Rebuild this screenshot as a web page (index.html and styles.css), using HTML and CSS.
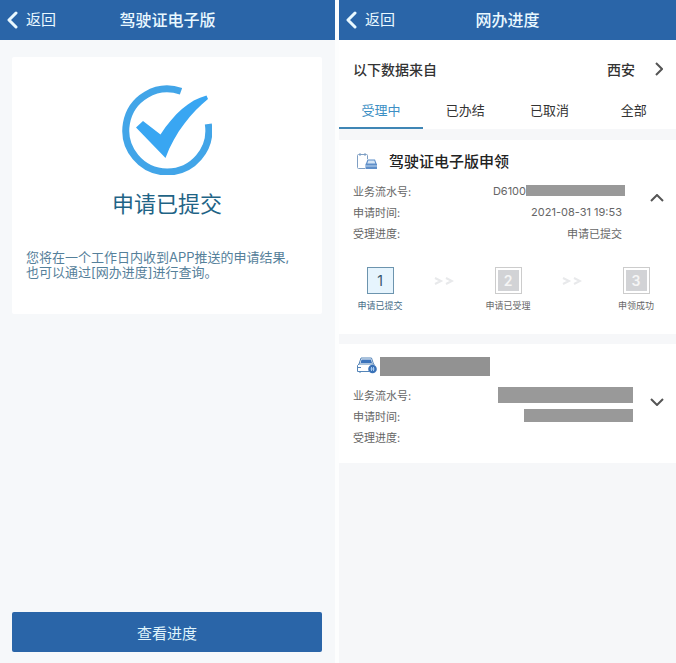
FILE: index.html
```html
<!DOCTYPE html>
<html lang="zh-CN">
<head>
<meta charset="utf-8">
<meta name="viewport" content="width=device-width, initial-scale=1">
<title>驾驶证电子版</title>
<link rel="stylesheet" href="styles.css">
</head>
<body>
<div class="screens">
  <section class="screen screen-result">
    <header class="navbar">
      <button class="back" type="button">
        <svg width="12" height="18" viewBox="0 0 12 18" aria-hidden="true"><path d="M10 2 3 9l7 7"/></svg>
        返回
      </button>
      <h1>驾驶证电子版</h1>
    </header>
    <main class="result-body">
      <div class="result-card">
        <svg class="result-icon" width="90" height="90" viewBox="0 0 90 90" aria-hidden="true">
          <path class="ring" d="M59 6.300A41.500 41.500 0 1 0 86.300 39"/>
          <path class="tick" d="M14 42.500 21 36 38.500 49.500C52 29 67 15 84.500 10.500L86 14C70 27 53 47 43.500 73Z"/>
        </svg>
        <h2>申请已提交</h2>
        <p>您将在一个工作日内收到APP推送的申请结果,<br>也可以通过[网办进度]进行查询。</p>
      </div>
      <button class="primary" type="button">查看进度</button>
    </main>
  </section>

  <section class="screen screen-progress">
    <header class="navbar">
      <button class="back" type="button">
        <svg width="12" height="18" viewBox="0 0 12 18" aria-hidden="true"><path d="M10 2 3 9l7 7"/></svg>
        返回
      </button>
      <h1>网办进度</h1>
    </header>
    <button class="source" type="button">
      <span>以下数据来自</span>
      <span class="city">西安</span>
      <svg class="chevron" width="8" height="14" viewBox="0 0 8 14" aria-hidden="true"><path d="m1 1 6 6-6 6"/></svg>
    </button>
    <nav class="tabs">
      <button class="tab active" type="button">受理中</button>
      <button class="tab" type="button">已办结</button>
      <button class="tab" type="button">已取消</button>
      <button class="tab" type="button">全部</button>
    </nav>
    <main class="records">
      <article class="record">
        <div class="record-title">
          <svg width="22" height="18" viewBox="0 0 22 18" aria-hidden="true">
            <path class="note" d="M9 15.500H2.500a1 1 0 0 1-1-1v-12a1 1 0 0 1 1-1h8a1 1 0 0 1 1 1V6M4 0v3M9 0v3"/>
            <path class="car-body" d="M10 10.500 11.500 6.500h7.500l1.500 4 .5.500v5H9.500v-5Z"/>
            <path class="car-window" d="M12.300 7.500h6l1 3h-8Z"/>
            <path class="car-light" d="M10 13h11"/>
          </svg>
          <h3>驾驶证电子版申领</h3>
        </div>
        <div class="record-main">
          <dl>
            <div><dt>业务流水号:</dt><dd class="serial">D6100<span class="mask mask-serial"></span></dd></div>
            <div><dt>申请时间:</dt><dd>2021-08-31 19:53</dd></div>
            <div><dt>受理进度:</dt><dd>申请已提交</dd></div>
          </dl>
          <button class="toggle" type="button" aria-label="收起">
            <svg class="chevron" width="14" height="8" viewBox="0 0 14 8" aria-hidden="true"><path d="m1 7 6-6 6 6"/></svg>
          </button>
        </div>
        <ol class="steps">
          <li class="step current"><span class="num">1</span><span>申请已提交</span></li>
          <li class="arrows"><svg width="20" height="8" viewBox="0 0 20 8" aria-hidden="true"><path d="m1 1 6 3-6 3M12 1l6 3-6 3"/></svg></li>
          <li class="step"><span class="num">2</span><span>申请已受理</span></li>
          <li class="arrows"><svg width="20" height="8" viewBox="0 0 20 8" aria-hidden="true"><path d="m1 1 6 3-6 3M12 1l6 3-6 3"/></svg></li>
          <li class="step"><span class="num">3</span><span>申领成功</span></li>
        </ol>
      </article>
      <article class="record">
        <div class="record-title masked">
          <svg width="22" height="18" viewBox="0 0 22 18" aria-hidden="true">
            <path class="car-line" d="M3 7 5 1h10.500L17.500 7M3 7 1.500 8.500V14.500H13M3 7h14.500l1 1M2 10.500h3M4 14.500V16"/>
            <path class="car-fill" d="M5.500 2.500h9.500L16 6H4.500Z"/>
            <circle class="badge" cx="16.500" cy="12" r="4.300"/>
            <path class="badge-mark" d="M15.500 10v4M17.500 10v4M14.500 12h4"/>
          </svg>
          <span class="mask mask-title"></span>
        </div>
        <div class="record-main">
          <dl>
            <div><dt>业务流水号:</dt><dd><span class="mask mask-long"></span></dd></div>
            <div><dt>申请时间:</dt><dd><span class="mask mask-short"></span></dd></div>
            <div><dt>受理进度:</dt><dd></dd></div>
          </dl>
          <button class="toggle" type="button" aria-label="展开">
            <svg class="chevron" width="14" height="8" viewBox="0 0 14 8" aria-hidden="true"><path d="m1 1 6 6 6-6"/></svg>
          </button>
        </div>
      </article>
    </main>
  </section>
</div>
</body>
</html>
```
FILE: styles.css
```css
* { box-sizing: border-box; }
body, h1, h2, h3, p, dl, dd, ol { margin: 0; padding: 0; }
body {
  background: #fdfefe;
  color: #333;
  font-family: Inter, "Noto Sans CJK SC", sans-serif;
}
button {
  margin: 0;
  padding: 0;
  border: 0;
  background: none;
  color: inherit;
  font: inherit;
}
svg { display: block; flex: none; fill: none; }

.screens {
  display: grid;
  grid-template-columns: 335fr 337fr;
  gap: 4px;
  min-height: 100vh;
}
.screen { display: flex; flex-direction: column; min-width: 0; }
.screen-result { background: #f6f8fa; }
.screen-progress { background: #f6f7f9; }

.navbar {
  display: grid;
  grid-template-columns: 1fr auto 1fr;
  align-items: center;
  height: 40px;
  padding: 0 6px;
  background: #2a65a8;
  color: #e9f8ff;
}
.navbar h1 { font-size: 16px; font-weight: 500; line-height: 24px; }
.back {
  display: flex;
  align-items: center;
  gap: 8px;
  font-size: 15px;
  line-height: 24px;
}
.back path { stroke: #e9f8ff; stroke-width: 3; stroke-linecap: round; stroke-linejoin: round; }

.result-body {
  display: flex;
  flex: 1;
  flex-direction: column;
  justify-content: space-between;
  padding: 17px 13px 11px 12px;
}
.result-card {
  padding: 28px 14px 34px;
  border-radius: 2px;
  background: #fff;
}
.result-icon { margin: 0 auto; }
.ring { stroke: #42a5e8; stroke-width: 7; }
.tick { fill: #39a6f2; }
.result-card h2 {
  margin-top: 13px;
  color: #1f6486;
  font-size: 22px;
  font-weight: 400;
  line-height: 32px;
  text-align: center;
}
.result-card p {
  margin-top: 30px;
  color: #55809a;
  font-size: 13px;
  line-height: 15px;
}
.primary {
  height: 40px;
  border-radius: 2px;
  background: #2a65a8;
  color: #dff3fb;
  font-size: 15px;
}

.source {
  display: flex;
  align-items: center;
  height: 55px;
  padding: 2px 13px 0 14px;
  background: #fff;
  font-size: 14px;
  font-weight: 500;
}
.city { margin: 0 20px 0 auto; }
.chevron path { stroke: #555; stroke-width: 2; }

.tabs { display: grid; grid-template-columns: repeat(4, 1fr); background: #fff; }
.tab {
  height: 34px;
  padding-bottom: 4px;
  border-bottom: 2px solid transparent;
  font-size: 13px;
}
.tab.active { border-color: #3f86b5; color: #3d8fc4; }

.records { display: grid; gap: 10px; margin-top: 11px; }
.record { padding: 11px 12px 16px 14px; background: #fff; }
.record-title { display: flex; align-items: center; gap: 11px; height: 22px; padding-left: 3px; }
.record-title.masked { gap: 2px; }
.record-title h3 { font-size: 15px; font-weight: 500; line-height: 22px; color: #222; }
.note { stroke: #7f9fc4; stroke-width: 1; }
.car-fill { fill: #3b73bb; }
.car-body { fill: #5f8fc9; }
.car-window { fill: #d5e5f5; }
.car-light { stroke: #c2d8ef; }
.car-line { stroke: #5585b8; }
.badge { fill: #3a72b8; }
.badge-mark { stroke: #a7caef; }

.record-main { display: flex; align-items: flex-start; margin-top: 7px; }
.record-main dl { flex: 1; padding-right: 17px; color: #666; font-size: 11px; }
.record-main dl > div {
  display: flex;
  align-items: center;
  justify-content: space-between;
  height: 21px;
}
.record-main dd { padding-right: 11px; }
.record-main dd.serial { display: flex; align-items: center; padding-right: 8px; }
.masked + .record-main dd { padding-right: 0; }
.mask { display: block; background: #999; }
.mask-serial { width: 99px; height: 11px; }
.mask-title { width: 110px; height: 19px; background: #929292; }
.mask-long { width: 135px; height: 16px; }
.mask-short { width: 109px; height: 13px; }
.toggle { padding: 14px 0; }

.steps {
  display: flex;
  justify-content: space-between;
  margin-top: 24px;
  padding: 0 4px 6px 3px;
  list-style: none;
  color: #666;
  font-size: 9px;
  line-height: 12px;
}
.step {
  display: flex;
  flex-direction: column;
  align-items: center;
  gap: 6px;
  width: 48px;
}
.step > span { white-space: nowrap; }
.num {
  width: 27px;
  height: 27px;
  padding: 2px;
  border: 1px solid #ccc;
  background: #d2d3d6 content-box;
  color: #f5f5f5;
  font-size: 14px;
  font-weight: 600;
  line-height: 21px;
  text-align: center;
}
.current { color: #456b85; }
.current .num {
  border-color: #6c94ae;
  background: #e6f4fd;
  color: #36566b;
  font-weight: 400;
}
.arrows { padding-top: 10px; }
.arrows path { stroke: #e8e9eb; stroke-width: 2; }
```
